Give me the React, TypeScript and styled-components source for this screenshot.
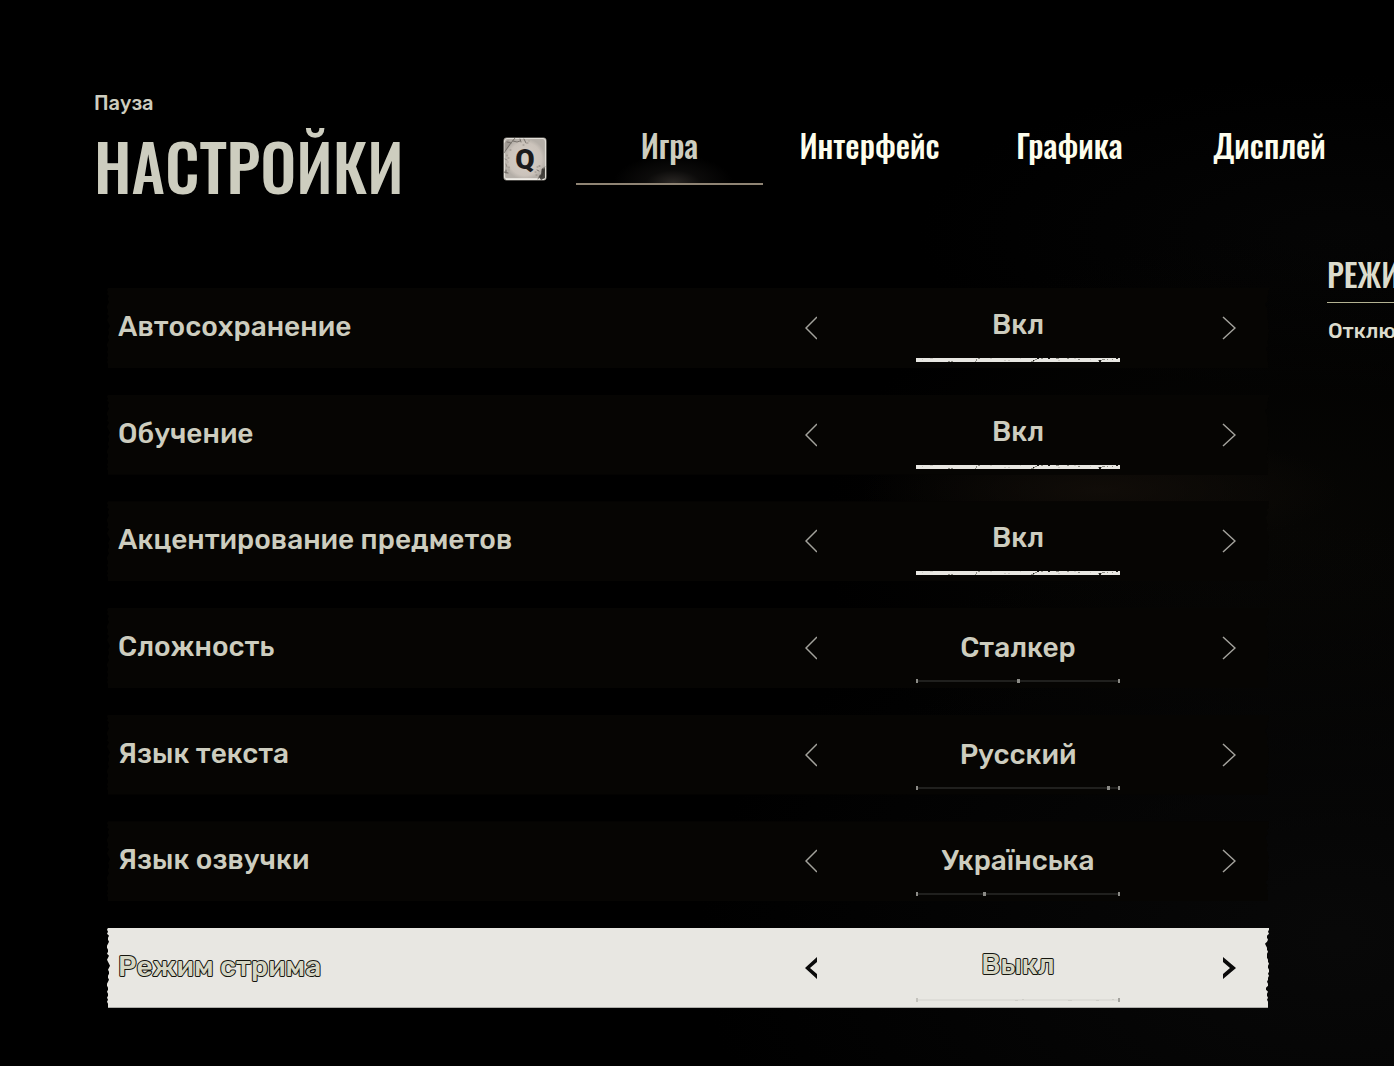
import React, { useState } from 'react';
import styled, { createGlobalStyle, css } from 'styled-components';

const display = '"Oswald", "Roboto Condensed", sans-serif';
const body = '"Rubik", "Roboto", sans-serif';

const ink = '#cdcdbf';
const bright = '#fdfdec';
const paper = '#e8e7e2';

const GlobalStyle = createGlobalStyle`
  *, *::before, *::after { box-sizing: border-box; }
  body {
    margin: 0;
    background: #020202;
    color: ${ink};
    font-family: ${body};
  }
  button, input { font: inherit; color: inherit; margin: 0; padding: 0; border: 0; background: none; }
  button { cursor: pointer; }
`;

const Page = styled.div`
  min-height: 100vh;
  padding: 90px 0 58px 94px;
  overflow: hidden;
  background:
    radial-gradient(240px 60px at 79% 46%, rgba(20, 15, 10, 0.8), transparent),
    radial-gradient(640px 420px at 96% 88%, rgba(9, 9, 9, 0.9), transparent),
    radial-gradient(460px 300px at 92% 50%, rgba(10, 9, 6, 0.7), transparent),
    radial-gradient(420px 160px at 96% 22%, rgba(5, 5, 5, 0.9), transparent),
    #000;
`;

const Header = styled.header`
  display: grid;
  grid-template-columns: 380px 44px minmax(0, 1fr);
  column-gap: 29px;
  padding-right: 31px;
`;

const Crumb = styled.p`
  margin: 0;
  font-size: 20px;
  font-weight: 500;
  line-height: 26px;
`;

const Title = styled.h1`
  margin: 0;
  font: 500 64px/98px ${display};
  text-transform: uppercase;
`;

const KeyCap = styled.button`
  position: relative;
  display: grid;
  place-items: center;
  width: 44px;
  height: 44px;
  margin-top: 47px;
  border-radius: 4px;
  color: #1b1a1c;
  font: 900 28px/46px "Roboto", sans-serif;
`;

const KeyArt = styled.svg`
  position: absolute;
  inset: 0;
  width: 100%;
  height: 100%;
`;

const KeyLetter = styled.span`
  position: relative;
`;

const Tabs = styled.nav`
  display: grid;
  grid-template-columns: repeat(4, minmax(0, 1fr));
  column-gap: 13px;
  align-self: start;
  padding-top: 23px;
`;

const Tab = styled.button<{ $active: boolean }>`
  height: 72px;
  padding-bottom: 6px;
  border-bottom: 2px solid transparent;
  color: ${bright};
  font: 500 32px/64px ${display};
  ${p => p.$active && css`
    border-bottom-color: #8f8474;
    color: ${ink};
    background: radial-gradient(60px 28px at 52% 100%, rgba(62, 57, 53, 0.7), rgba(30, 28, 26, 0.4) 45%, transparent);
  `}
`;

const Content = styled.main`
  display: grid;
  grid-template-columns: minmax(0, 1fr) 67px;
  column-gap: 58px;
  padding: 74px 0 0 13px;
`;

const List = styled.div`
  display: grid;
  align-content: start;
  row-gap: 2.5vh;
`;

const Row = styled.section<{ $selected: boolean; $edge: string }>`
  display: grid;
  grid-template-columns: minmax(0, 1fr) 111px 204px 116px;
  height: 80px;
  padding: 0 33px 0 11px;
  background: #060503;
  clip-path: ${p => p.$edge};
  ${p => p.$selected && css`
    background: ${paper};
    color: #d6d7c5;
    -webkit-text-stroke: 2px #15150f;
    paint-order: stroke fill;
  `}
`;

const Label = styled.h2`
  margin: 0;
  font-size: 28px;
  font-weight: 500;
  line-height: 78px;
`;

const Arrow = styled.button<{ $end?: boolean; $selected: boolean }>`
  display: flex;
  align-items: center;
  justify-content: ${p => (p.$end ? 'flex-end' : 'flex-start')};
  height: 80px;
  color: ${p => (p.$selected ? '#0a0a0a' : '#a3a29c')};
`;

const Value = styled.div<{ $toggle: boolean }>`
  display: flex;
  flex-direction: column;
  align-items: center;
  justify-content: space-between;
  height: 80px;
  padding-bottom: ${p => (p.$toggle ? 6 : 5)}px;
`;

const ValueText = styled.output<{ $toggle: boolean }>`
  font-size: 28px;
  font-weight: 500;
  line-height: ${p => (p.$toggle ? 74 : 79)}px;
  height: 70px;
  white-space: nowrap;
`;

const Track = styled.svg`
  display: block;
  width: 100%;
  height: 4px;
`;

const Slider = styled.input`
  appearance: none;
  display: block;
  width: 100%;
  height: 4px;
  background:
    linear-gradient(#8b8b86, #8b8b86) left / 2px 4px no-repeat,
    linear-gradient(#8b8b86, #8b8b86) right / 2px 4px no-repeat,
    linear-gradient(#20201e, #20201e) center / 100% 2px no-repeat;
  &::-webkit-slider-thumb {
    appearance: none;
    width: 3px;
    height: 4px;
    background: #8b8b86;
  }
`;

const Hint = styled.aside`
  overflow: hidden;
  white-space: nowrap;
  margin-top: -40px;
`;

const HintTitle = styled.h2`
  margin: 0;
  height: 55px;
  border-bottom: 1px solid #b3b292;
  font: 500 32px/52px ${display};
  color: #dcdccd;
`;

const HintText = styled.p`
  margin: 0;
  padding: 14px 0 0 1px;
  font-size: 21px;
  font-weight: 500;
  line-height: 28px;
  color: #dcdccd;
`;

/* Ragged left and right sides of the paper strip, as insets in pixels. */
const leftTear = [1, 0, 1, 0, 2, 1, 1, 2, 1, 0, 0, 1, 1, 0, 2, 1, 0, 1, 2, 3, 2, 1, 2, 2, 1, 1, 2, 1, 0, 0, 1, 1, 0, 1, 1, 0, 1, 0, 1, 1, 1];
const rightTear = [0, 0, 1, 0, 2, 2, 1, 2, 4, 3, 2, 2, 1, 2, 2, 2, 1, 1, 0, 1, 1, 0, 0, 1, 0, 1, 1, 2, 1, 1, 3, 3, 1, 2, 2, 1, 2, 1, 1, 1, 1];
const tornEdge = (() => {
  const step = 100 / (leftTear.length - 1);
  const right = rightTear.map((x, i) => `calc(100% - ${x}px) ${i * step}%`);
  const left = leftTear.map((x, i) => `${x}px ${i * step}%`).reverse();
  return `polygon(${[...right, ...left].join(', ')})`;
})();

function Chevron({ side, bold }: { side: 'left' | 'right'; bold: boolean }) {
  const thin = side === 'left' ? 'M12 1 1 12 12 23' : 'M1 1 13 12 1 23';
  return (
    <svg width={side === 'left' ? 12 : 14} height="24" viewBox={side === 'left' ? '0 0 12 24' : '0 0 14 24'} aria-hidden="true">
      {bold ? (
        <path
          d={side === 'left' ? 'M12 1v5L5 12l7 6v5L0 12z' : 'M1 1v5l7 6-7 6v5l13-11z'}
          fill="currentColor"
        />
      ) : (
        <path d={thin} fill="none" stroke="currentColor" strokeWidth="1.5" />
      )}
    </svg>
  );
}

function WornBar() {
  return (
    <Track viewBox="0 0 204 4" preserveAspectRatio="none" aria-hidden="true">
      <path d="M0 0h204v4H0z" fill={paper} />
      <g fill="none" stroke="#85847d" strokeWidth="0.9">
        <path d="M32 3.500h2M35 3.500h2M59 3.500h1M60 2.500h1M60 1.500h1M62 .5h2M115 3.500h3M117 2.500h2M119 1.500h2M125 .5h2M140 .5h3M151 .5h2M162 1.500h2M182 2.500h4M186 1.500h3M191 1.500h1M196 1.500h1" />
      </g>
      <path d="M183 2h2v2h-2zM200 0h2v1h-2zM132 0h2v1h-2zM121 0h2v1h-2zM117 2h1v1h-1z" fill="#1d1c19" />
      <g fill="none" stroke="#c4c3bc" strokeWidth="0.8">
        <path d="M6 1.500h1M14 .5h3M74 .5h2M88 2.500h2M92 2.500h2M104 .5h1M142 2.500h2M158 .5h2M174 1.500h1" />
      </g>
    </Track>
  );
}

function FadedBar() {
  return (
    <Track viewBox="0 0 204 4" preserveAspectRatio="none" aria-hidden="true">
      <path d="M0 1h204v2H0z" fill="#deddd8" />
      <path d="M0 0h2v4H0z" fill="#c4c3bd" />
      <path d="M202 0h2v4h-2z" fill="#a4a39e" />
      <path d="M99 2.500h3M106 1.500h2M152 2.500h4M180 2.500h3M196 1.500h2" fill="none" stroke="#cbcac4" strokeWidth="0.8" />
    </Track>
  );
}

function KeyTexture() {
  return (
    <KeyArt viewBox="0 0 44 44" aria-hidden="true">
      <defs>
        <radialGradient id="key-face">
          <stop offset="0" stopColor="#d6cec6" />
          <stop offset="0.8" stopColor="#cbc3bb" />
          <stop offset="1" stopColor="#b5afa8" />
        </radialGradient>
      </defs>
      <rect x="0.500" y="0.500" width="43" height="43" rx="3" fill="#8e8a84" />
      <rect x="1.500" y="1.500" width="41" height="41" rx="3" fill="url(#key-face)" stroke="#e2dfd8" strokeWidth="1.200" />
      <path d="M3 42h38" stroke="#f3f1eb" strokeWidth="1.600" />
      <g fill="none" stroke="#5d5852" strokeLinecap="round" opacity="0.8">
        <path d="M12 1 8 6l-3 4-4 6M8 6 4 5M10 4l4 1 3-1M17 2l1 3M21 2l2 4" strokeWidth="0.900" />
        <path d="M1 35l4 1M3 33v3" strokeWidth="1.100" />
        <path d="M42 30l-3 2v3M41 33l-1 4-2 3M36 29h1M34 33l2 1M37 38l-2 4" strokeWidth="0.900" />
      </g>
      <g fill="none" stroke="#8d8780" strokeLinecap="round" strokeWidth="0.900">
        <path d="M2 22l2 1M3 27l1 3M5 21h1M7 13h1M24 6h1M20 8h1M6 30v1M4 18v1M32 35h1M34 30h1M5 25h0M6 33h0M26 4h0M33 38h1" />
      </g>
      <path d="M42 31l-3 1-1 5-2 3 2 3 4-2z" fill="#2d2a27" opacity="0.800" />
      <path d="M1 15l5-5 2-5-3-2-4 3z" fill="#6d6862" opacity="0.300" />
    </KeyArt>
  );
}

interface Setting {
  label: string;
  value: string;
  start: number;
  kind: 'toggle' | 'choice';
  steps?: number;
}

const settings: Setting[] = [
  { label: 'Автосохранение', value: 'Вкл', start: 1, kind: 'toggle' },
  { label: 'Обучение', value: 'Вкл', start: 1, kind: 'toggle' },
  { label: 'Акцентирование предметов', value: 'Вкл', start: 1, kind: 'toggle' },
  { label: 'Сложность', value: 'Сталкер', start: 1, kind: 'choice', steps: 2 },
  { label: 'Язык текста', value: 'Русский', start: 20, kind: 'choice', steps: 21 },
  { label: 'Язык озвучки', value: 'Українська', start: 1, kind: 'choice', steps: 3 },
  { label: 'Режим стрима', value: 'Выкл', start: 0, kind: 'toggle' },
];

function SettingRow({ setting, selected }: { setting: Setting; selected: boolean }) {
  const [position, setPosition] = useState(setting.start);
  const last = setting.steps ?? 1;
  const toggle = setting.kind === 'toggle';
  const text = toggle ? (position === 1 ? 'Вкл' : 'Выкл') : setting.value;
  const move = (by: number) => setPosition(p => Math.min(last, Math.max(0, p + by)));
  return (
    <Row $selected={selected} $edge={tornEdge} aria-label={setting.label}>
      <Label>{setting.label}</Label>
      <Arrow type="button" $selected={selected} aria-label="Назад" onClick={() => move(-1)}>
        <Chevron side="left" bold={selected} />
      </Arrow>
      <Value $toggle={toggle}>
        <ValueText $toggle={toggle}>{text}</ValueText>
        {toggle ? (
          position === 1 ? <WornBar /> : <FadedBar />
        ) : (
          <Slider
            type="range"
            min={0}
            max={last}
            value={position}
            aria-label={setting.label}
            onChange={e => setPosition(Number(e.target.value))}
          />
        )}
      </Value>
      <Arrow type="button" $end $selected={selected} aria-label="Вперёд" onClick={() => move(1)}>
        <Chevron side="right" bold={selected} />
      </Arrow>
    </Row>
  );
}

const tabs = ['Игра', 'Интерфейс', 'Графика', 'Дисплей'];

export default function App() {
  const [tab, setTab] = useState(0);
  return (
    <>
      <GlobalStyle />
      <Page>
        <Header>
          <div>
            <Crumb>Пауза</Crumb>
            <Title>Настройки</Title>
          </div>
          <KeyCap type="button">
            <KeyTexture />
            <KeyLetter>Q</KeyLetter>
          </KeyCap>
          <Tabs>
            {tabs.map((name, i) => (
              <Tab key={name} type="button" $active={i === tab} onClick={() => setTab(i)}>
                {name}
              </Tab>
            ))}
          </Tabs>
        </Header>
        <Content>
          <List>
            {settings.map((setting, i) => (
              <SettingRow key={setting.label} setting={setting} selected={i === settings.length - 1} />
            ))}
          </List>
          <Hint>
            <HintTitle>РЕЖИ</HintTitle>
            <HintText>Отклю</HintText>
          </Hint>
        </Content>
      </Page>
    </>
  );
}
